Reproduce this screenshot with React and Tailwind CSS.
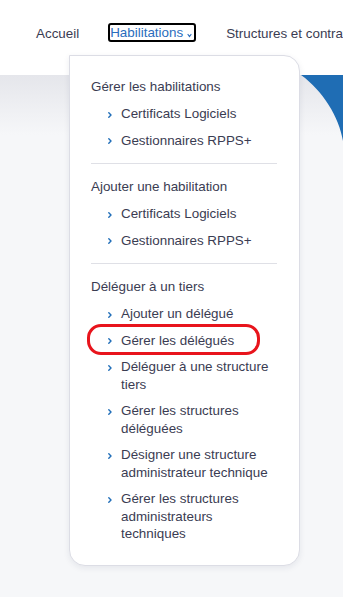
import React from "react";

const Chevron = () => (
  <svg width="4" height="6" viewBox="0 0 4 6" className="shrink-0 mt-[6.5px] ml-[1px]">
    <path d="M0.8 0.8 L3 3 L0.8 5.2" fill="none" stroke="#1f6db8" strokeWidth="1.4" strokeLinecap="round" strokeLinejoin="round" />
  </svg>
);

const Item = ({ children }) => (
  <li className="flex items-start gap-[9px] pl-[16px]">
    <Chevron />
    <span>{children}</span>
  </li>
);

const Section = ({ title, items, last }) => (
  <div className={last ? "pt-[14px]" : "pb-[14px] border-b border-[#dfe0e6] pt-[14px]"}>
    <div>{title}</div>
    <ul className="mt-[9.5px] flex flex-col gap-[9px]">
      {items.map((t) => (
        <Item key={t}>{t}</Item>
      ))}
    </ul>
  </div>
);

export default function App() {
  return (
    <div
      className="relative w-[343px] h-[597px] overflow-hidden bg-[#f6f7f9] text-[#3a3c52]"
      style={{ fontFamily: '"Liberation Sans", Arial, sans-serif' }}
    >
      <div className="h-[75px] bg-white flex items-start pt-[23px] pl-[36px] text-[13.4px] whitespace-nowrap">
        <span className="mt-[2px] leading-[17px]">Accueil</span>
        <span className="ml-[29px] flex items-center border-2 border-black rounded-[3px] h-[19px] pl-[0px] pr-[2px] text-[#2a6dbd] leading-[15px]">
          Habilitations
          <svg width="5" height="5" viewBox="0 0 5 5" className="ml-[4px] mt-[5px]">
            <path d="M1 1.5 L2.5 3.5 L4 1.5" fill="none" stroke="#2a6dbd" strokeWidth="1.2" strokeLinecap="round" />
          </svg>
        </span>
        <span className="ml-[30px] mt-[2px] leading-[17px]">Structures et contrats</span>
      </div>
      <div className="h-[60px] bg-gradient-to-b from-[#e5e6eb] to-[#f6f7f9]" />
      <svg
        className="absolute left-[301px] top-[75px]"
        width="42"
        height="70"
        viewBox="0 0 42 70"
      >
        <path d="M0 0 L42 0 L42 66 C38 42 22 16 0 0 Z" fill="#1f6db4" />
      </svg>
      <div className="absolute left-[69px] top-[55px] w-[231px] bg-white border border-[#dcdde5] rounded-2xl rounded-tl-none shadow-[0_2px_6px_rgba(30,40,80,0.08)] pl-[21px] pr-[22px] pt-[8px] pb-[22px] text-[13.4px] leading-[17.5px]">
        <Section title="Gérer les habilitations" items={["Certificats Logiciels", "Gestionnaires RPPS+"]} />
        <Section title="Ajouter une habilitation" items={["Certificats Logiciels", "Gestionnaires RPPS+"]} />
        <Section
          last
          title="Déléguer à un tiers"
          items={[
            "Ajouter un délégué",
            "Gérer les délégués",
            "Déléguer à une structure tiers",
            "Gérer les structures déléguées",
            "Désigner une structure administrateur technique",
            "Gérer les structures administrateurs techniques",
          ]}
        />
      </div>
      <div className="absolute left-[87px] top-[324px] w-[173px] h-[31px] border-[3px] border-[#e8141c] rounded-[14px]" />
    </div>
  );
}
